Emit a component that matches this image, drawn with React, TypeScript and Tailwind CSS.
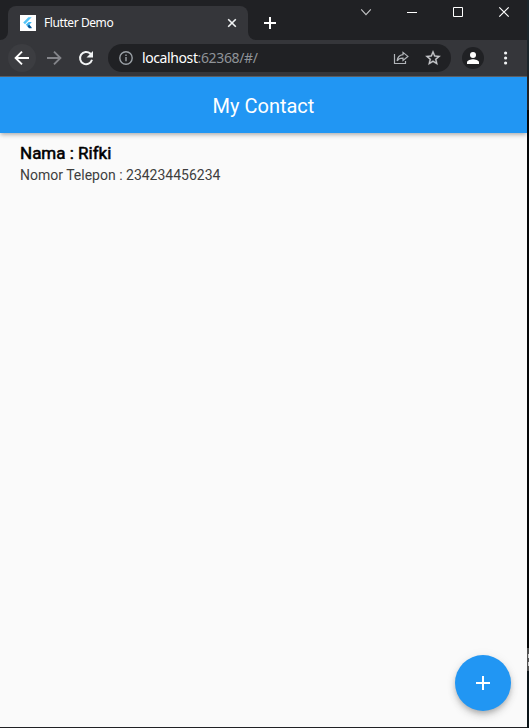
import React from "react";

function TabStrip() {
  return (
    <div className="flex h-10 items-end bg-[#202124]">
      <div className="flex h-[34px] w-2 items-end bg-[#35363a]">
        <div className="h-full w-full rounded-br-lg bg-[#202124]" />
      </div>
      <div className="flex h-[34px] w-60 items-center rounded-t-lg bg-[#35363a] pr-[11px] pl-3">
        <svg width="16" height="16" viewBox="0 0 16 16" className="shrink-0">
          <rect width="16" height="16" fill="#fff" />
          <path d="M8.4 2.3h3.3L5 9.2 3.2 7.4z" fill="#54c5f8" />
          <path d="M8.6 7.1h3.2L7.8 11.6 5.8 9.8z" fill="#43b9f3" />
          <path d="M7.4 11.3l1.8-1.7 2.5 2.8v.8H9z" fill="#01579b" />
        </svg>
        <span className="ml-2 flex-1 text-[12px] leading-4 tracking-[-0.42px] whitespace-nowrap text-white">Flutter Demo</span>
        <svg width="10" height="10" viewBox="0 0 10 10" stroke="#f1f3f4" strokeWidth="1.6">
          <path d="M1.2 1.2l7.6 7.6M8.8 1.2L1.2 8.8" />
        </svg>
      </div>
      <div className="h-[34px] w-2 bg-[#35363a]">
        <div className="h-full w-full rounded-bl-lg bg-[#202124]" />
      </div>
      <svg width="12" height="12" viewBox="0 0 12 12" className="mb-[11px] ml-2" stroke="#fff" strokeWidth="2">
        <path d="M6 0v12M0 6h12" />
      </svg>
      <div className="ml-auto flex h-10 w-[184px] items-start pt-1">
        <svg width="184" height="16" viewBox="0 0 184 16" fill="none" stroke="#fff">
          <path d="M18.2 5.3l4.8 5.4 4.8-5.4" stroke="#c4c5c7" strokeWidth="1.1" />
          <path d="M64 8.5h10" />
          <path d="M110.5 3.5h9v9h-9z" />
          <path d="M156.3 3.3l9.4 9.4m0-9.4l-9.4 9.4" strokeWidth="1.2" />
        </svg>
      </div>
    </div>
  );
}

function Toolbar() {
  return (
    <div className="flex h-9 items-center bg-[#35363a] pl-2">
      <div className="flex h-7 w-7 items-center justify-center rounded-full bg-[#3c3d41]">
        <svg width="16" height="16" viewBox="0 0 16 16" fill="none" stroke="#fff" strokeWidth="1.9">
          <path d="M15 8H2M8 1.6L1.6 8 8 14.4" />
        </svg>
      </div>
      <svg width="16" height="16" viewBox="0 0 16 16" fill="none" stroke="#84858a" strokeWidth="1.9" className="ml-[10px]">
        <path d="M1 8h13M8 1.6L14.4 8 8 14.4" />
      </svg>
      <svg width="16" height="16" viewBox="0 0 16 16" fill="none" className="ml-4">
        <path d="M14 9.8a6.1 6.1 0 1 1-1.7-6.2L13.4 4.8" stroke="#f1f3f4" strokeWidth="2" />
        <path d="M15 1v6.5H8.5z" fill="#f1f3f4" />
      </svg>
      <div className="ml-[14px] flex h-7 w-[343px] items-center rounded-full bg-[#202124] pr-[9px] pl-[11px]">
        <svg width="14" height="14" viewBox="0 0 14 14" fill="none" stroke="#9aa0a6" strokeWidth="1.4">
          <circle cx="7" cy="7" r="6.2" />
          <path d="M7 6v4.3M7 3.4v1.5" />
        </svg>
        <span className="ml-[9px] flex-1 text-[14px] leading-5 whitespace-nowrap">
          <span className="tracking-[-0.4px] text-white">localhost</span>
          <span className="tracking-[-0.35px] text-[#8f9398]">:62368/#/</span>
        </span>
        <svg width="16" height="16" viewBox="0 0 16 16" fill="none" stroke="#b1b4b8" strokeWidth="1.2">
          <path d="M1.5 4v9.5h11v-2.5" />
          <path d="M10 2.4L14.9 6.4 10 10.4V8.2C7.4 8.1 5.4 9 4.1 10.8 4.5 7.5 6.6 5 10 4.6z" />
        </svg>
        <svg width="18" height="18" viewBox="0 0 24 24" className="ml-[15px]" fill="#c8cacd">
          <path stroke="#c8cacd" strokeWidth=".4" d="M22 9.24l-7.19-.62L12 2 9.19 8.63 2 9.24l5.46 4.73L5.82 21 12 17.27 18.18 21l-1.63-7.03L22 9.24zM12 15.4l-3.76 2.27 1-4.28-3.32-2.88 4.38-.38L12 6.1l1.71 4.04 4.38.38-3.32 2.88 1 4.28L12 15.4z" />
        </svg>
      </div>
      <div className="ml-[11px] flex h-[22px] w-[22px] items-center justify-center rounded-full bg-[#202124]">
        <svg width="12" height="12" viewBox="0 0 12 12" fill="#fff">
          <circle cx="6" cy="3" r="3" />
          <path d="M0 12v-1.8C0 8.1 4 7.2 6 7.2s6 .9 6 3V12z" />
        </svg>
      </div>
      <svg width="4" height="14" viewBox="0 0 4 14" fill="#f1f3f4" className="ml-5">
        <circle cx="1.6" cy="2" r="1.6" />
        <circle cx="1.6" cy="7" r="1.6" />
        <circle cx="1.6" cy="12" r="1.6" />
      </svg>
    </div>
  );
}

export default function App() {
  return (
    <div className="flex h-[728px] w-[529px] overflow-hidden bg-[#14181c]">
      <div className="flex w-[527px] flex-col font-['Noto_Sans',sans-serif]">
        <TabStrip />
        <Toolbar />
        <div className="h-px bg-[#5d5e62]" />
        <div className="relative flex flex-1 flex-col overflow-hidden bg-[#fafafa] font-['Roboto',sans-serif]">
          <header className="flex h-14 shrink-0 items-center justify-center bg-[#2196f3] shadow-[0_2px_4px_-1px_rgba(0,0,0,0.2),0_3px_5px_0_rgba(0,0,0,0.08),0_1px_5px_0_rgba(0,0,0,0.1)]">
            <h1 className="pt-[2px] text-[20px] leading-6 text-white">My Contact</h1>
          </header>
          <main className="px-5 pt-[9px]">
            <p className="mb-px text-[17px] leading-[22px] text-black [-webkit-text-stroke:0.55px_black]">Nama : Rifki</p>
            <p className="text-[14px] leading-5 text-[#3e3e3e]">Nomor Telepon : 234234456234</p>
          </main>
          <button className="absolute right-4 bottom-4 flex h-14 w-14 items-center justify-center rounded-full bg-[#2196f3] shadow-[0_3px_5px_-1px_rgba(0,0,0,0.2),0_5px_9px_0_rgba(0,0,0,0.12),0_1px_12px_0_rgba(0,0,0,0.06)]">
            <svg width="14" height="14" viewBox="0 0 14 14" stroke="#fff" strokeWidth="2">
              <path d="M7 0v14M0 7h14" />
            </svg>
          </button>
        </div>
        <div className="h-px bg-[#202124]" />
      </div>
      <div className="flex w-[2px] flex-col">
        <div className="h-[70px] bg-[#1c262b]" />
        <div className="h-10 bg-[#202225]" />
        <div className="flex-1 bg-[#050607]" />
        <div className="flex h-[23px] flex-col items-end bg-[#505050] pt-[6px]">
          <div className="h-1 w-px bg-[#d0d0d0]" />
          <div className="mt-1 h-1 w-px bg-[#d0d0d0]" />
        </div>
        <div className="h-[57px] bg-[#0b1418]" />
      </div>
    </div>
  );
}
